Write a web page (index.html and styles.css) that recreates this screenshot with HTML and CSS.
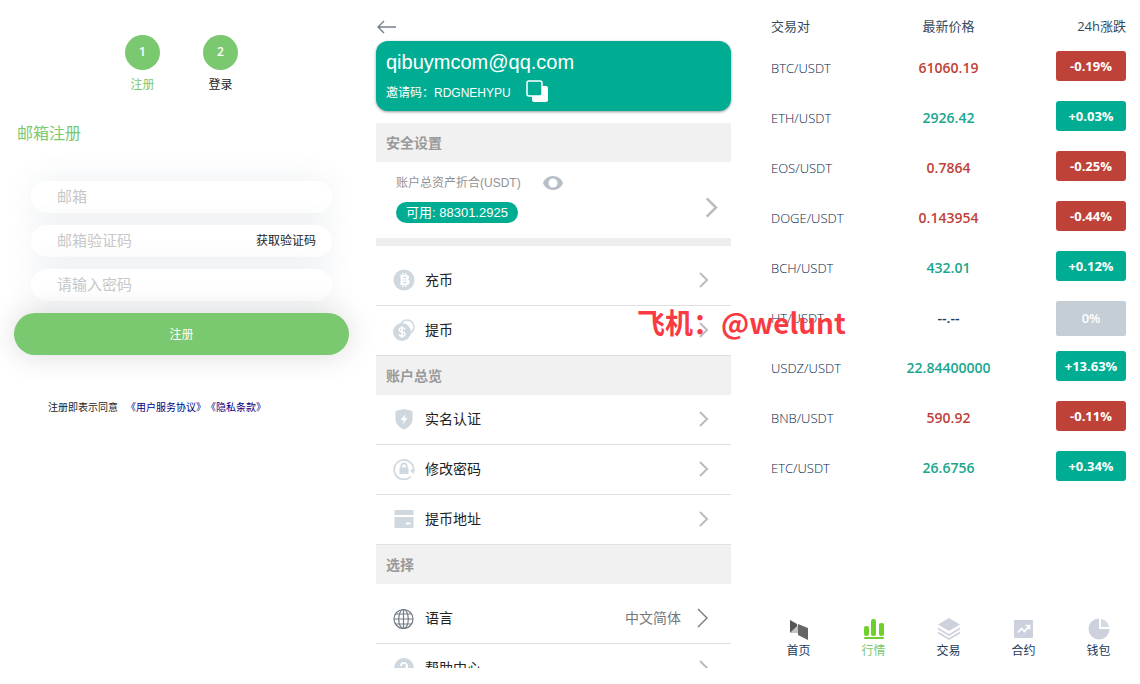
FILE: index.html
```
<!DOCTYPE html>
<html lang="zh-CN">
<head>
  <meta charset="UTF-8">
  <meta name="viewport" content="width=device-width, initial-scale=1.0">
  <title>注册</title>
  <link rel="stylesheet" href="styles.css">
</head>
<body>
  <svg class="sprite" aria-hidden="true">
    <symbol id="arrow" viewBox="0 0 10 16">
      <path d="M1 1l7 7-7 7" fill="none" stroke="currentColor" stroke-width="2"/>
    </symbol>
  </svg>

  <div class="page">
    <!-- register -->
    <section class="register">
      <ol class="steps">
        <li class="step active"><span class="step-num">1</span>注册</li>
        <li class="step"><span class="step-num">2</span>登录</li>
      </ol>
      <h1 class="register-title">邮箱注册</h1>
      <form class="form">
        <div class="field">
          <input type="email" placeholder="邮箱" aria-label="邮箱">
        </div>
        <div class="field">
          <input type="text" placeholder="邮箱验证码" aria-label="邮箱验证码">
          <button type="button" class="code-btn">获取验证码</button>
        </div>
        <div class="field">
          <input type="password" placeholder="请输入密码" aria-label="请输入密码">
        </div>
        <button type="button" class="submit">注册</button>
      </form>
      <p class="terms"><span>注册即表示同意</span><a href="#">《用户服务协议》</a><a href="#">《隐私条款》</a></p>
    </section>

    <!-- account -->
    <section class="account">
      <a href="#" class="back" aria-label="返回">
        <svg width="21" height="14" viewBox="0 0 21 14"><path d="M8 1L2 7l6 6M2 7h18" fill="none" stroke="#75808c" stroke-width="1.4"/></svg>
      </a>
      <div class="card">
        <div class="email">qibuymcom@qq.com</div>
        <div class="invite">
          <span>邀请码：RDGNEHYPU</span>
          <button type="button" class="copy" aria-label="复制">
            <svg width="22" height="22" viewBox="0 0 22 22"><rect x="6" y="6" width="16" height="16" rx="2" fill="#fff"/><rect x="1" y="1" width="15" height="15" rx="2" fill="#00ad93" stroke="#fff" stroke-width="1.5"/></svg>
          </button>
        </div>
      </div>

      <h2 class="group">安全设置</h2>
      <a href="#" class="assets">
        <span class="assets-info">
          <span class="assets-label">账户总资产折合(USDT)
            <svg width="20" height="14" viewBox="0 0 20 14"><path d="M10 0C5 0 1.500 3 0 7c1.500 4 5 7 10 7s8.500-3 10-7c-1.500-4-5-7-10-7z" fill="#b6bec6"/><circle cx="10" cy="7" r="4.500" fill="#fff"/></svg>
          </span>
          <span class="available">可用: 88301.2925</span>
        </span>
        <svg class="chevron big"><use href="#arrow"/></svg>
      </a>

      <ul class="menu first">
        <li><a href="#">
          <svg class="icon" viewBox="0 0 22 22"><circle cx="11" cy="11" r="10.500" fill="#cfd7df"/><path d="M7.500 6h6a2.500 2.500 0 0 1 1.500 4.600 2.800 2.800 0 0 1-1.300 5.400H7.500zM9.200 4h1.300v2H9.200zM12 4h1.300v2H12zM9.200 16h1.300v2H9.200zM12 16h1.300v2H12z" fill="#fff"/><path d="M10 8.300h3.300M10 11h3.500M10 13.700h3.500" stroke="#cfd7df" stroke-width="1.2"/></svg>
          <span>充币</span><svg class="chevron"><use href="#arrow"/></svg></a></li>
        <li><a href="#">
          <svg class="icon" viewBox="0 0 22 22"><circle cx="14" cy="8" r="7" fill="#fff" stroke="#cfd7df" stroke-width="1.500"/><circle cx="9" cy="13" r="9" fill="#cfd7df"/><path d="M12 10.500c-.5-1.300-1.500-1.700-3-1.700-1.700 0-2.800.8-2.800 2 0 3 5.800 1.300 5.800 4.300 0 1.300-1.200 2.200-3 2.200-1.600 0-2.800-.7-3.200-2M9 7v12" fill="none" stroke="#fff" stroke-width="1.500"/></svg>
          <span>提币</span><svg class="chevron"><use href="#arrow"/></svg></a></li>
      </ul>

      <h2 class="group">账户总览</h2>
      <ul class="menu">
        <li><a href="#">
          <svg class="icon" viewBox="0 0 22 22"><path d="M11 1l8.500 2v8.500c0 5-4 8-8.500 10-4.500-2-8.500-5-8.500-10V3z" fill="#cfd7df"/><path d="M12.500 6L7.500 12h3l-1 4.500 5-6.500h-3z" fill="#fff"/></svg>
          <span>实名认证</span><svg class="chevron"><use href="#arrow"/></svg></a></li>
        <li><a href="#">
          <svg class="icon" viewBox="0 0 22 22"><path d="M17.800 18.500A9.700 9.700 0 1 1 20.600 12" fill="none" stroke="#cfd7df" stroke-width="1.700"/><path d="M17 12l5-1-1.500 5z" fill="#cfd7df"/><path d="M8.300 10V8a2.700 2.700 0 0 1 5.400 0v2" fill="none" stroke="#cfd7df" stroke-width="1.700"/><rect x="6.500" y="9.500" width="9" height="6.500" rx="1" fill="#cfd7df"/></svg>
          <span>修改密码</span><svg class="chevron"><use href="#arrow"/></svg></a></li>
        <li><a href="#">
          <svg class="icon" viewBox="0 0 22 22"><path d="M2.500 2h17a1 1 0 0 1 1 1v4h-19V3a1 1 0 0 1 1-1zM1.500 9h19v10a1 1 0 0 1-1 1h-17a1 1 0 0 1-1-1z" fill="#cfd7df"/><path d="M13 15.500h4.500" stroke="#fff" stroke-width="2"/></svg>
          <span>提币地址</span><svg class="chevron"><use href="#arrow"/></svg></a></li>
      </ul>

      <h2 class="group">选择</h2>
      <ul class="menu first">
        <li><a href="#">
          <svg class="icon" viewBox="0 0 22 22"><g fill="none" stroke="#727c88" stroke-width="1.200"><circle cx="10.500" cy="12" r="9.500"/><ellipse cx="10.500" cy="12" rx="4.800" ry="9.500"/><path d="M10.500 2.500v19M1 12h19M2.500 7h16M2.500 17h16"/></g></svg>
          <span>语言</span><em class="value">中文简体</em><svg class="chevron thin" viewBox="0 0 12 20"><path d="M1 1l9 9-9 9" fill="none" stroke="currentColor" stroke-width="1.400"/></svg></a></li>
        <li><a href="#">
          <svg class="icon" viewBox="0 0 22 22"><circle cx="11" cy="11" r="10" fill="#cfd7df"/><path d="M8 9a3 3 0 1 1 4.500 2.500c-1 .6-1.500 1-1.500 2.500M11 15.500v2" fill="none" stroke="#fff" stroke-width="1.800"/></svg>
          <span>帮助中心</span><svg class="chevron"><use href="#arrow"/></svg></a></li>
      </ul>
    </section>

    <!-- market -->
    <section class="market">
      <div class="quotes-box">
        <table class="quotes">
          <thead>
            <tr><th>交易对</th><th>最新价格</th><th>24h涨跌</th></tr>
          </thead>
          <tbody>
            <tr class="down"><td>BTC/USDT</td><td>61060.19</td><td><span class="change">-0.19%</span></td></tr>
            <tr class="up"><td>ETH/USDT</td><td>2926.42</td><td><span class="change">+0.03%</span></td></tr>
            <tr class="down"><td>EOS/USDT</td><td>0.7864</td><td><span class="change">-0.25%</span></td></tr>
            <tr class="down"><td>DOGE/USDT</td><td>0.143954</td><td><span class="change">-0.44%</span></td></tr>
            <tr class="up"><td>BCH/USDT</td><td>432.01</td><td><span class="change">+0.12%</span></td></tr>
            <tr class="flat"><td>HT/USDT</td><td>--.--</td><td><span class="change">0%</span></td></tr>
            <tr class="up"><td>USDZ/USDT</td><td>22.84400000</td><td><span class="change">+13.63%</span></td></tr>
            <tr class="down"><td>BNB/USDT</td><td>590.92</td><td><span class="change">-0.11%</span></td></tr>
            <tr class="up"><td>ETC/USDT</td><td>26.6756</td><td><span class="change">+0.34%</span></td></tr>
          </tbody>
        </table>
      </div>

      <nav class="tabs">
        <a href="#">
          <svg viewBox="0 0 22 22"><path d="M2 2l7 4v3l-7 6z" fill="#555"/><path d="M2 15l8-8v8z" fill="#c4c4c4"/><path d="M10 6l10 4v12l-10-5z" fill="#666"/></svg>
          首页</a>
        <a href="#" class="active">
          <svg viewBox="0 0 22 22"><g fill="#6fd02c"><rect x="1" y="8" width="5" height="10" rx="2"/><rect x="8" y="1" width="5" height="17" rx="2"/><rect x="16" y="5" width="5" height="13" rx="2"/><rect x="1" y="19" width="20" height="2" rx="1"/></g></svg>
          行情</a>
        <a href="#">
          <svg viewBox="0 0 22 22"><path d="M11 0l11 6.500-11 6.500L0 6.500z" fill="#cdd1de"/><path d="M0 10.500l11 6.500 11-6.500M0 14.500L11 21l11-6.500" fill="none" stroke="#cdd1de" stroke-width="1.600"/></svg>
          交易</a>
        <a href="#">
          <svg viewBox="0 0 22 22"><rect x="1" y="2" width="19" height="18" rx="1" fill="#cdd1de"/><path d="M5 14.500l3.500-4 3 3 5-6M12.500 7.500h4v4" fill="none" stroke="#fff" stroke-width="1.700"/></svg>
          合约</a>
        <a href="#">
          <svg viewBox="0 0 22 22"><path d="M11 .5V11h10.500A10.500 10.500 0 1 1 11 .5z" fill="#cdd1de"/><path d="M13 1a9 9 0 0 1 8 8h-8z" fill="#d6dae4"/></svg>
          钱包</a>
      </nav>
    </section>
  </div>

  <div class="watermark">飞机：@welunt</div>
</body>
</html>
```
FILE: styles.css
```
* {
  box-sizing: border-box;
}

body {
  margin: 0;
  font-family: "Open Sans", "Noto Sans CJK SC", sans-serif;
  font-size: 12px;
  color: #222;
  background-color: #fff;
}

a {
  color: inherit;
  text-decoration: none;
}

button {
  border: none;
  background: none;
  padding: 0;
  font-family: inherit;
  cursor: pointer;
}

ul, ol {
  list-style: none;
  margin: 0;
  padding: 0;
}

.sprite {
  display: none;
}

.page {
  display: grid;
  grid-template-columns: 363fr 381fr 396fr;
  grid-template-rows: 100vh;
}

/* register */
.register {
  padding: 35px 14px 0;
}

.steps {
  display: flex;
  justify-content: center;
  gap: 43px;
}

.step {
  display: flex;
  flex-direction: column;
  align-items: center;
  gap: 6px;
  width: 35px;
  line-height: 18px;
}

.step.active {
  color: #7ac86f;
}

.step-num {
  width: 35px;
  height: 35px;
  line-height: 34px;
  border-radius: 50%;
  text-align: center;
  font-weight: 600;
  color: #fff;
  background-color: #7ac86f;
}

.register-title {
  margin: 27px 3px 36px;
  font-size: 16px;
  line-height: 24px;
  font-weight: 400;
  color: #7ac86f;
}

.form {
  display: flex;
  flex-direction: column;
  gap: 12px;
}

.field {
  display: flex;
  align-items: center;
  height: 32px;
  margin: 0 17px;
  padding: 0 16px 2px 26px;
  border-radius: 16px;
  background-color: #fff;
  box-shadow: 0 0 30px rgba(70, 100, 130, 0.1);
}

.field input {
  flex: 1;
  min-width: 0;
  padding: 0;
  border: none;
  outline: none;
  background: none;
  font-family: inherit;
  font-size: 15px;
}

.field input::placeholder {
  color: #c8c8c8;
}

.code-btn {
  font-size: 12px;
  color: #222;
}

.submit {
  height: 42px;
  border-radius: 21px;
  font-size: 12px;
  color: #fff;
  background-color: #7ac86f;
  box-shadow: 0 0 30px rgba(0, 0, 0, 0.15);
}

.terms {
  display: flex;
  margin: 44px 34px 0;
  font-size: 10px;
  line-height: 16px;
}

.terms a {
  color: #000080;
}

.terms span {
  margin-right: 8px;
}

/* account */
.account {
  margin-bottom: 16px;
  padding: 20px 13px 0;
  overflow: hidden;
  font-family: "Liberation Sans", "Noto Sans CJK SC", sans-serif;
}

.back {
  display: flex;
  height: 21px;
}

.card {
  height: 70px;
  padding: 9px 10px 0;
  border-radius: 12px;
  color: #fff;
  background-color: #00ad93;
  box-shadow: 0 1px 3px rgba(0, 0, 0, 0.4);
}

.email {
  font-size: 20px;
  line-height: 24px;
}

.invite {
  display: flex;
  align-items: center;
  gap: 15px;
  margin-top: 6px;
  height: 22px;
}

.copy {
  display: flex;
}

.group {
  margin: 0;
  padding: 0 10px;
  font-size: 14px;
  line-height: 40px;
  height: 39px;
  font-weight: 700;
  color: #999;
  background-color: #f1f1f1;
}

.card + .group {
  margin-top: 12px;
}

.assets {
  display: flex;
  align-items: flex-end;
  justify-content: space-between;
  height: 84px;
  padding: 0 12px 15px 20px;
  border-bottom: 8px solid #eee;
}

.assets-info {
  display: flex;
  flex-direction: column;
  align-items: flex-start;
  gap: 10px;
}

.assets-label {
  display: flex;
  align-items: center;
  gap: 22px;
  line-height: 18px;
  color: #929292;
}

.available {
  padding: 0 10px;
  border-radius: 11px;
  font-size: 13px;
  line-height: 21px;
  color: #fff;
  background-color: #00ad93;
}

.menu.first {
  padding-top: 10px;
}

.menu a {
  display: flex;
  align-items: center;
  height: 50px;
  padding: 0 22px 1px 17px;
  border-bottom: 1px solid #e0e0e0;
  font-size: 14px;
}

.menu span,
.value {
  padding-bottom: 2px;
}

.icon {
  width: 22px;
  height: 22px;
  margin-right: 10px;
}

.chevron {
  width: 10px;
  height: 16px;
  margin-left: auto;
  color: #bcbcbc;
}

.chevron.big {
  width: 14px;
  height: 21px;
  margin-bottom: 5px;
}

.chevron.thin {
  width: 12px;
  height: 20px;
  margin-left: 16px;
  color: #777;
}

.value {
  margin-left: auto;
  font-style: normal;
  color: #777;
}

/* market */
.market {
  display: flex;
  flex-direction: column;
  justify-content: space-between;
  padding: 9px 4px 24px 17px;
  color: #1d3a5c;
}

.quotes-box {
  padding: 0 10px;
}

.quotes {
  width: 100%;
  table-layout: fixed;
  border-collapse: collapse;
  font-size: 13px;
  text-align: center;
}

.quotes th {
  height: 34px;
  padding: 0 0 2px;
  font-weight: 400;
  color: #34495e;
}

.quotes td {
  height: 50px;
  padding: 0;
}

.quotes th:first-child,
.quotes td:first-child {
  text-align: left;
}

.quotes td:first-child {
  font-weight: 300;
  color: #06264a;
}

.quotes td:nth-child(2) {
  padding-bottom: 2px;
  font-size: 14px;
  font-weight: 600;
}

.quotes th:last-child {
  text-align: right;
}

.quotes td:last-child {
  padding-top: 8px;
  vertical-align: top;
}

.change {
  display: block;
  width: 70px;
  margin-left: auto;
  border-radius: 3px;
  line-height: 30px;
  font-weight: 700;
  color: #fff;
}

.up {
  color: #1aa68c;
}

.down {
  color: #be4238;
}

.up .change {
  background-color: #00ad93;
}

.down .change {
  background-color: #be4238;
}

.flat .change {
  line-height: 35px;
  border-radius: 2px;
  font-weight: 600;
  background-color: #c5ced5;
}

.tabs {
  display: flex;
}

.tabs a {
  flex: 1;
  display: flex;
  flex-direction: column;
  align-items: center;
  gap: 2px;
  line-height: 18px;
}

.tabs svg {
  width: 22px;
  height: 22px;
}

.tabs .active {
  color: #7ac86f;
}

.watermark {
  position: absolute;
  top: 302px;
  left: 637px;
  font-family: "Noto Sans CJK SC", sans-serif;
  font-size: 28px;
  line-height: 40px;
  font-weight: 700;
  color: #fa3a43;
  pointer-events: none;
}
```
